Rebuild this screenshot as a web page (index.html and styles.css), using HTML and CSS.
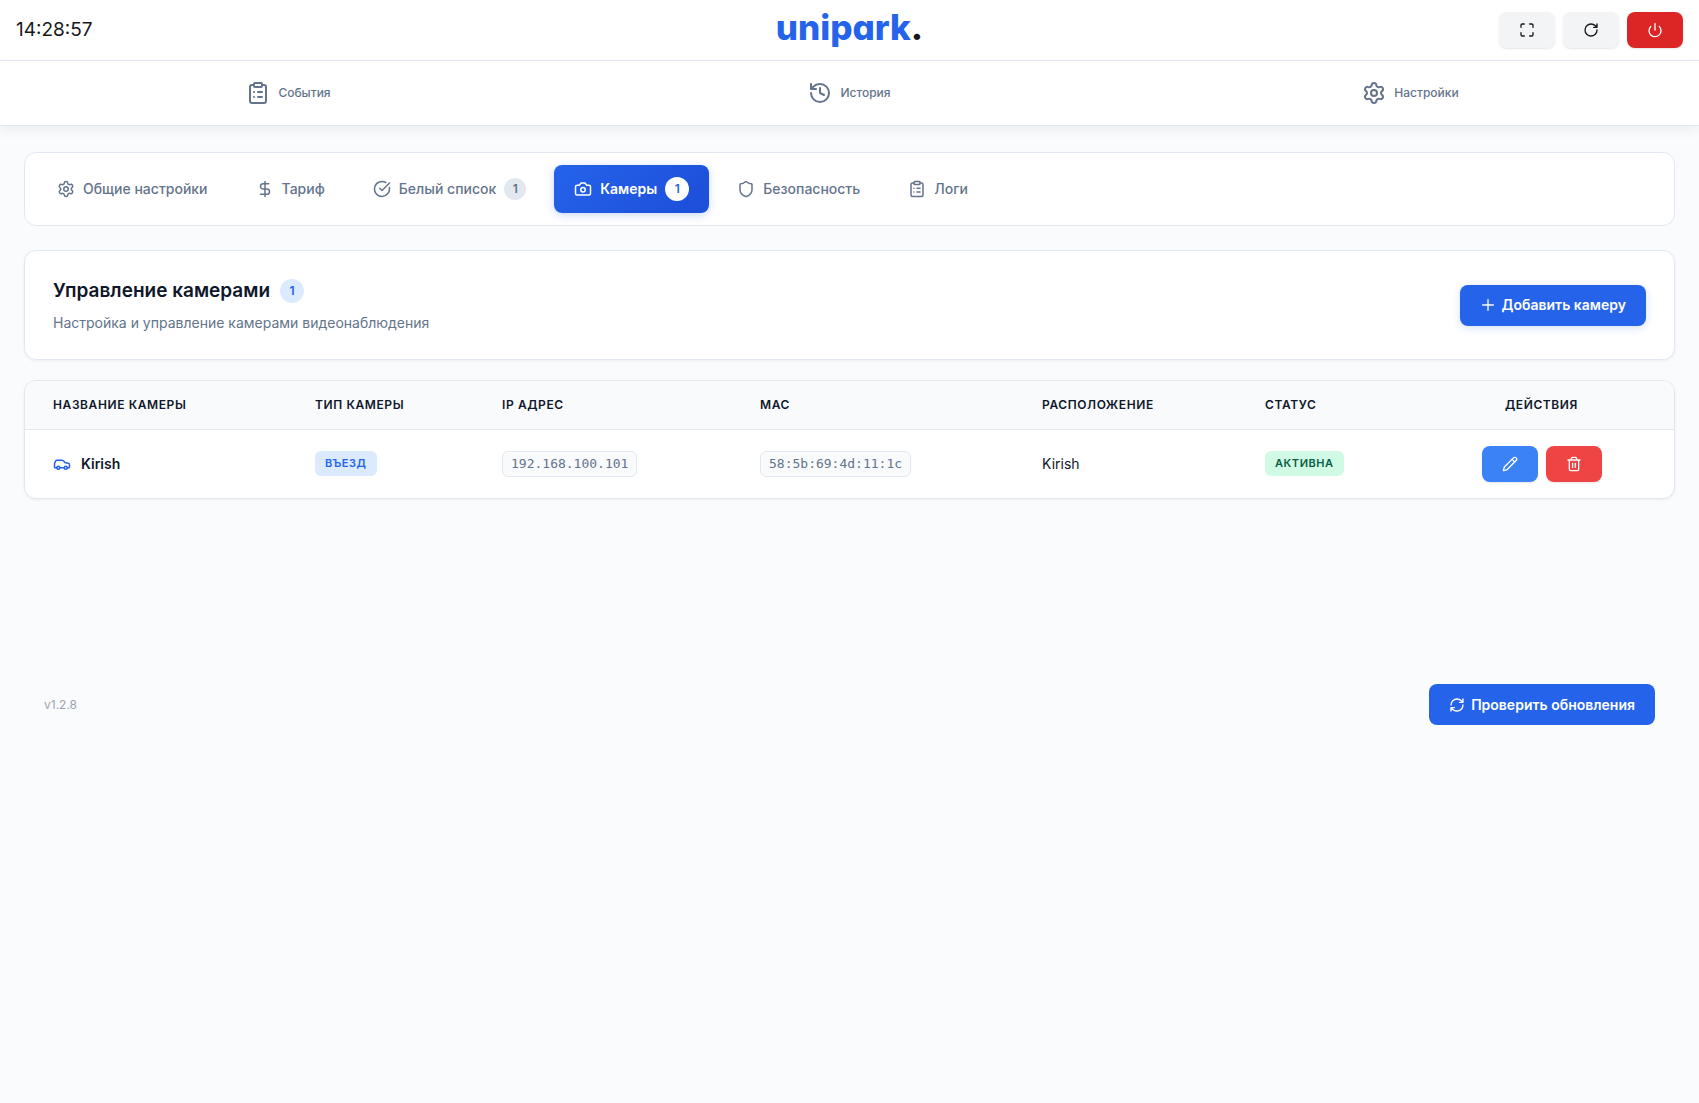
FILE: index.html
```html
<!DOCTYPE html>
<html lang="ru">
<head>
  <meta charset="UTF-8" />
  <meta name="viewport" content="width=device-width, initial-scale=1.0"/>
  <title>unipark. - Камеры</title>
  <link rel="stylesheet" href="styles.css">
</head>
<body>
  <!-- Иконки -->
  <svg class="sprite" aria-hidden="true">
    <symbol id="i-clipboard" viewBox="0 0 24 24">
      <rect x="8" y="2" width="8" height="4" rx="1"/>
      <path d="M16 4h2a2 2 0 0 1 2 2v14a2 2 0 0 1-2 2H6a2 2 0 0 1-2-2V6a2 2 0 0 1 2-2h2M12 11h4M12 16h4M8 11h.01M8 16h.01"/>
    </symbol>
    <symbol id="i-history" viewBox="0 0 24 24">
      <path d="M3 12a9 9 0 1 0 9-9 9.75 9.75 0 0 0-6.74 2.74L3 8M3 3v5h5M12 7v5l4 2"/>
    </symbol>
    <symbol id="i-settings" viewBox="0 0 24 24">
      <path d="M9.671 4.136a2.34 2.34 0 0 1 4.659 0 2.34 2.34 0 0 0 3.319 1.915 2.34 2.34 0 0 1 2.33 4.033 2.34 2.34 0 0 0 0 3.831 2.34 2.34 0 0 1-2.33 4.033 2.34 2.34 0 0 0-3.319 1.915 2.34 2.34 0 0 1-4.659 0 2.34 2.34 0 0 0-3.32-1.915 2.34 2.34 0 0 1-2.33-4.033 2.34 2.34 0 0 0 0-3.831A2.34 2.34 0 0 1 6.35 6.051a2.34 2.34 0 0 0 3.319-1.915"/>
      <circle cx="12" cy="12" r="3"/>
    </symbol>
    <symbol id="i-dollar" viewBox="0 0 24 24">
      <path d="M12 2v20M17 5H9.5a3.5 3.5 0 0 0 0 7h5a3.5 3.5 0 0 1 0 7H6"/>
    </symbol>
    <symbol id="i-check" viewBox="0 0 24 24">
      <path d="M21.801 10A10 10 0 1 1 17 3.335M9 11l3 3L22 4"/>
    </symbol>
    <symbol id="i-camera" viewBox="0 0 24 24">
      <path d="M14.5 4h-5L7 7H4a2 2 0 0 0-2 2v9a2 2 0 0 0 2 2h16a2 2 0 0 0 2-2V9a2 2 0 0 0-2-2h-3l-2.5-3z"/>
      <circle cx="12" cy="13" r="3"/>
    </symbol>
    <symbol id="i-shield" viewBox="0 0 24 24">
      <path d="M20 13c0 5-3.5 7.5-7.66 8.95a1 1 0 0 1-.67-.01C7.5 20.5 4 18 4 13V6a1 1 0 0 1 1-1c2 0 4.5-1.2 6.24-2.72a1.17 1.17 0 0 1 1.52 0C14.51 3.81 17 5 19 5a1 1 0 0 1 1 1z"/>
    </symbol>
    <symbol id="i-maximize" viewBox="0 0 24 24">
      <path d="M8 3H5a2 2 0 0 0-2 2v3M21 8V5a2 2 0 0 0-2-2h-3M3 16v3a2 2 0 0 0 2 2h3M16 21h3a2 2 0 0 0 2-2v-3"/>
    </symbol>
    <symbol id="i-reload" viewBox="0 0 24 24">
      <path d="M21 12a9 9 0 1 1-9-9c2.52 0 4.93 1 6.74 2.74L21 8M21 3v5h-5"/>
    </symbol>
    <symbol id="i-power" viewBox="0 0 24 24">
      <path d="M12 2v10M18.4 6.6a9 9 0 1 1-12.77.04"/>
    </symbol>
    <symbol id="i-plus" viewBox="0 0 24 24">
      <path d="M4 12h16M12 4v16"/>
    </symbol>
    <symbol id="i-car" viewBox="0 0 24 24">
      <path d="M19 17h2c.6 0 1-.4 1-1v-3c0-.9-.7-1.7-1.5-1.9C18.7 10.6 16 10 16 10s-1.3-1.4-2.2-2.3c-.5-.4-1.1-.7-1.8-.7H5c-.6 0-1.1.4-1.4.9l-1.4 2.9A3.7 3.7 0 0 0 2 12v4c0 .6.4 1 1 1h2M9 17h6"/>
      <circle cx="7" cy="17" r="2"/>
      <circle cx="17" cy="17" r="2"/>
    </symbol>
    <symbol id="i-pencil" viewBox="0 0 24 24">
      <path d="M21.174 6.812a1 1 0 0 0-3.986-3.987L3.842 16.174a2 2 0 0 0-.5.83l-1.321 4.352a.5.5 0 0 0 .623.622l4.353-1.32a2 2 0 0 0 .83-.497zM15 5l4 4"/>
    </symbol>
    <symbol id="i-trash" viewBox="0 0 24 24">
      <path d="M3 6h18M19 6v14a2 2 0 0 1-2 2H7a2 2 0 0 1-2-2V6M8 6V4a2 2 0 0 1 2-2h4a2 2 0 0 1 2 2v2M10 11v6M14 11v6"/>
    </symbol>
    <symbol id="i-refresh" viewBox="0 0 24 24">
      <path d="M3 12a9 9 0 0 1 9-9 9.75 9.75 0 0 1 6.74 2.74L21 8M21 3v5h-5M21 12a9 9 0 0 1-9 9 9.75 9.75 0 0 1-6.74-2.74L3 16M8 16H3v5"/>
    </symbol>
  </svg>

  <!-- Шапка -->
  <header class="header">
    <time class="clock">14:28:57</time>
    <a href="#" class="logo">unipark<span class="logo-dot">.</span></a>
    <div class="header-actions">
      <button class="icon-btn" aria-label="На весь экран"><svg class="icon"><use href="#i-maximize"/></svg></button>
      <button class="icon-btn" aria-label="Обновить"><svg class="icon"><use href="#i-reload"/></svg></button>
      <button class="icon-btn power" aria-label="Выключить"><svg class="icon"><use href="#i-power"/></svg></button>
    </div>
  </header>

  <nav class="main-nav">
    <a href="#"><svg class="icon"><use href="#i-clipboard"/></svg>События</a>
    <a href="#"><svg class="icon"><use href="#i-history"/></svg>История</a>
    <a href="#"><svg class="icon"><use href="#i-settings"/></svg>Настройки</a>
  </nav>

  <main class="content">
    <!-- Вкладки настроек -->
    <div class="card tabs">
      <button class="tab"><svg class="icon"><use href="#i-settings"/></svg>Общие настройки</button>
      <button class="tab"><svg class="icon"><use href="#i-dollar"/></svg>Тариф</button>
      <button class="tab"><svg class="icon"><use href="#i-check"/></svg>Белый список<span class="count">1</span></button>
      <button class="tab active"><svg class="icon"><use href="#i-camera"/></svg>Камеры<span class="count">1</span></button>
      <button class="tab"><svg class="icon"><use href="#i-shield"/></svg>Безопасность</button>
      <button class="tab"><svg class="icon"><use href="#i-clipboard"/></svg>Логи</button>
    </div>

    <section class="card page-head">
      <div>
        <h1 class="page-title">Управление камерами <span class="count">1</span></h1>
        <p class="page-subtitle">Настройка и управление камерами видеонаблюдения</p>
      </div>
      <button class="btn btn-shadow"><svg class="icon"><use href="#i-plus"/></svg>Добавить камеру</button>
    </section>

    <!-- Таблица камер -->
    <section class="card table-card">
      <table class="cameras">
        <thead>
          <tr>
            <th class="col-name">Название камеры</th>
            <th class="col-type">Тип камеры</th>
            <th class="col-ip">IP адрес</th>
            <th class="col-mac">MAC</th>
            <th class="col-place">Расположение</th>
            <th class="col-status">Статус</th>
            <th class="col-actions">Действия</th>
          </tr>
        </thead>
        <tbody>
          <tr>
            <td><div class="camera-name"><svg class="icon"><use href="#i-car"/></svg>Kirish</div></td>
            <td><span class="badge entry">Въезд</span></td>
            <td><code class="address">192.168.100.101</code></td>
            <td><code class="address">58:5b:69:4d:11:1c</code></td>
            <td>Kirish</td>
            <td><span class="badge online">Активна</span></td>
            <td>
              <div class="row-actions">
                <button class="icon-btn edit" aria-label="Изменить"><svg class="icon"><use href="#i-pencil"/></svg></button>
                <button class="icon-btn delete" aria-label="Удалить"><svg class="icon"><use href="#i-trash"/></svg></button>
              </div>
            </td>
          </tr>
        </tbody>
      </table>
    </section>

    <footer class="footer">
      <span class="version">v1.2.8</span>
      <button class="btn"><svg class="icon"><use href="#i-refresh"/></svg>Проверить обновления</button>
    </footer>
  </main>
</body>
</html>
```
FILE: styles.css
```css
/* ================================
   Общее
   ================================ */
* {
  margin: 0;
  padding: 0;
  box-sizing: border-box;
}
body {
  font-family: Inter, "Open Sans", sans-serif;
  font-size: 14px;
  line-height: 20px;
  color: #0f172a;
  background-color: #fafbfd;
}
a {
  color: inherit;
  text-decoration: none;
}
button {
  font: inherit;
  border: none;
  cursor: pointer;
}
.sprite {
  display: none;
}
.icon {
  width: 16px;
  height: 16px;
  flex-shrink: 0;
  fill: none;
  stroke: currentColor;
  stroke-width: 2;
  stroke-linecap: round;
  stroke-linejoin: round;
}

/* ================================
   Шапка
   ================================ */
.header {
  display: grid;
  grid-template-columns: 1fr auto 1fr;
  align-items: center;
  height: 61px;
  padding: 0 16px;
  background: #fff;
  border-bottom: 1px solid #e2e8f0;
}
.clock {
  font-size: 19px;
  color: #18181b;
}
.logo {
  padding-bottom: 6px;
  font-size: 35px;
  line-height: 40px;
  font-weight: 800;
  font-feature-settings: "cv11";
  color: #2563eb;
}
.logo-dot {
  color: #18181b;
}
.header-actions {
  display: flex;
  justify-content: flex-end;
  gap: 8px;
}
.icon-btn {
  display: flex;
  align-items: center;
  justify-content: center;
  width: 56px;
  height: 36px;
  border-radius: 8px;
  color: #18181b;
  background: #f3f4f6;
  box-shadow: 0 1px 2px rgba(0, 0, 0, 0.1);
}
.icon-btn.power {
  color: #fff;
  background: #dc2626;
}

.main-nav {
  display: grid;
  grid-template-columns: repeat(3, 1fr);
  height: 65px;
  padding: 0 8px;
  background: #fff;
  border-bottom: 1px solid #e2e8f0;
  box-shadow: 0 4px 12px rgba(0, 0, 0, 0.06);
}
.main-nav a {
  display: flex;
  align-items: center;
  justify-content: center;
  gap: 8px;
  font-size: 12px;
  font-weight: 500;
  color: #64748b;
}
.main-nav .icon {
  width: 24px;
  height: 24px;
}

/* ================================
   Карточки и вкладки
   ================================ */
.content {
  padding: 26px 24px;
}
.card {
  background: #fff;
  border: 1px solid #e2e8f0;
  border-radius: 12px;
}
.tabs {
  display: flex;
  gap: 8px;
  padding: 12px;
  margin-bottom: 24px;
}
.tab {
  display: flex;
  align-items: center;
  gap: 8px;
  height: 48px;
  padding: 0 20px;
  border-radius: 8px;
  font-weight: 500;
  color: #64748b;
  background: transparent;
}
.tab .icon {
  width: 18px;
  height: 18px;
}
.tab.active {
  font-weight: 600;
  color: #fff;
  background: linear-gradient(135deg, #2563eb, #1d4ed8);
  box-shadow: 0 2px 8px rgba(37, 99, 235, 0.25);
}
.count {
  min-width: 22px;
  height: 22px;
  border-radius: 12px;
  font-size: 12px;
  line-height: 22px;
  font-weight: 600;
  text-align: center;
  background: #e2e8f0;
}
.tab.active .count {
  min-width: 24px;
  height: 24px;
  line-height: 24px;
  color: #2563eb;
  background: #fff;
}

.page-head {
  display: flex;
  align-items: center;
  justify-content: space-between;
  padding: 28px;
  margin-bottom: 20px;
  box-shadow: 0 1px 3px rgba(0, 0, 0, 0.06);
}
.page-title {
  display: flex;
  align-items: center;
  gap: 10px;
  font-size: 19px;
  line-height: 24px;
  font-weight: 600;
}
.page-title .count {
  min-width: 24px;
  height: 24px;
  line-height: 24px;
  color: #2563eb;
  background: #dbeafe;
}
.page-subtitle {
  margin-top: 12px;
  line-height: 16px;
  color: #64748b;
}
.btn {
  display: flex;
  align-items: center;
  gap: 6px;
  height: 41px;
  padding: 0 20px;
  border-radius: 8px;
  font-weight: 600;
  color: #fff;
  background: #2563eb;
}
.btn-shadow {
  box-shadow: 0 2px 8px rgba(37, 99, 235, 0.2);
}

/* ================================
   Таблица
   ================================ */
.table-card {
  overflow: hidden;
  box-shadow: 0 1px 3px rgba(0, 0, 0, 0.06);
}
.cameras {
  width: 100%;
  table-layout: fixed;
  border-collapse: collapse;
}
.cameras th,
.cameras td {
  padding: 0 28px;
  text-align: left;
}
.cameras th {
  height: 48px;
  font-size: 12px;
  font-weight: 600;
  letter-spacing: 0.05em;
  text-transform: uppercase;
  background: #f9fafc;
  border-bottom: 1px solid #e2e8f0;
}
.cameras td {
  height: 69px;
}
.cameras .col-name { width: 262px; }
.cameras .col-type { width: 187px; }
.cameras .col-ip { width: 258px; }
.cameras .col-mac { width: 282px; }
.cameras .col-place { width: 223px; }
.cameras .col-status { width: 172px; }
.cameras .col-actions {
  width: 265px;
  text-align: center;
}
.camera-name {
  display: flex;
  align-items: center;
  gap: 10px;
  font-weight: 600;
}
.camera-name .icon {
  width: 18px;
  height: 18px;
  color: #2563eb;
}
.badge {
  display: inline-block;
  padding: 0 10px;
  border-radius: 6px;
  font-size: 11px;
  line-height: 25px;
  font-weight: 600;
  letter-spacing: 0.05em;
  text-transform: uppercase;
}
.badge.entry {
  color: #2563eb;
  background: #dbeafe;
}
.badge.online {
  color: #065f46;
  background: #d1fae5;
}
.address {
  display: inline-block;
  padding: 0 8px;
  border: 1px solid #e2e8f0;
  border-radius: 6px;
  font-family: "DejaVu Sans Mono", monospace;
  font-size: 13px;
  line-height: 24px;
  color: #64748b;
  background: #f9fafc;
}
.row-actions {
  display: flex;
  justify-content: center;
  gap: 8px;
}
.icon-btn.edit {
  color: #fff;
  background: #3b82f6;
}
.icon-btn.delete {
  color: #fff;
  background: #ef4444;
}

/* ================================
   Подвал
   ================================ */
.footer {
  display: flex;
  align-items: center;
  justify-content: space-between;
  margin-top: 165px;
  padding: 20px;
}
.version {
  font-size: 12px;
  color: #9ca3af;
}
```
